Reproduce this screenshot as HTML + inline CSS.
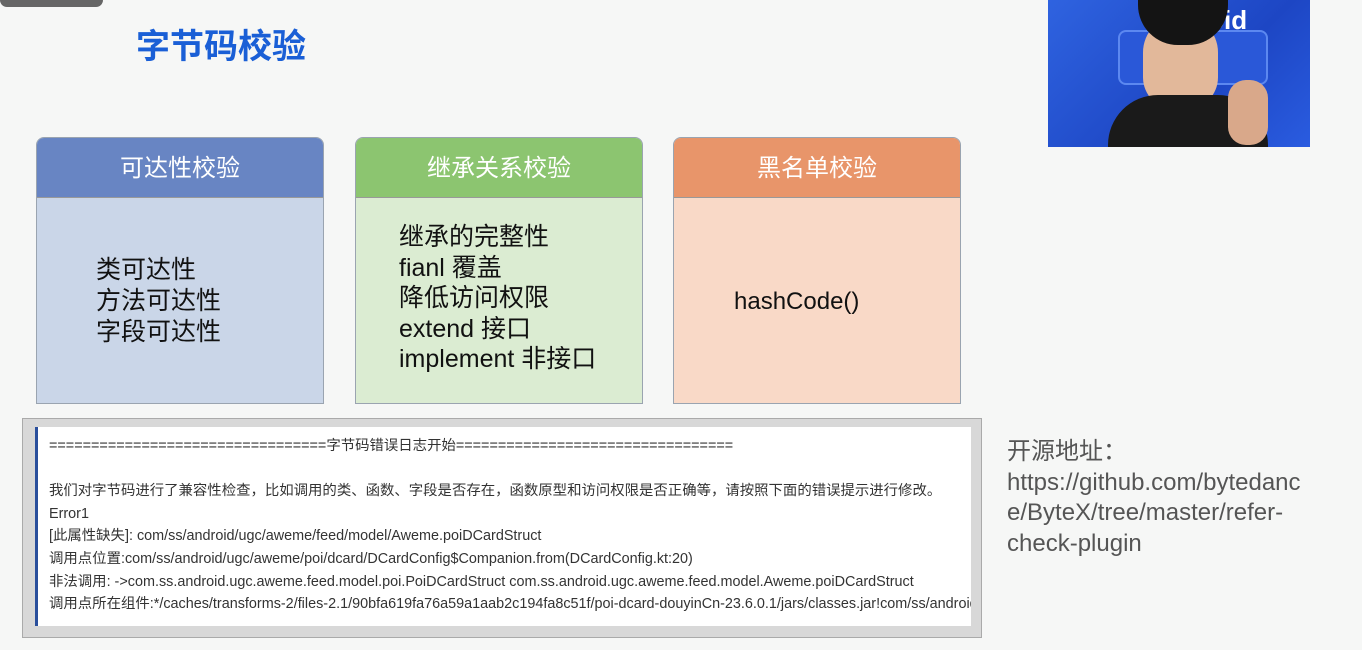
<!DOCTYPE html>
<html><head><meta charset="utf-8"><style>
*{margin:0;padding:0;box-sizing:border-box}
body{width:1362px;height:650px;background:#f6f7f6;position:relative;overflow:hidden;font-family:"Liberation Sans","Noto Sans CJK SC",sans-serif}
.a{position:absolute}
.title{left:136px;top:19px;font-size:34px;font-weight:bold;color:#1a5fd6}
.box{border:1px solid #9aa4b0;border-radius:8px 8px 0 0;overflow:hidden;top:137px;width:288px;height:267px}
.hd{height:60px;color:#fff;font-size:24px;text-align:center;line-height:62px;border-bottom:1px solid #999}
.bd{height:207px;font-size:25px;color:#111;line-height:31px}
.log{left:22px;top:418px;width:960px;height:220px;background:#d8d8d8;border:1px solid #aaa}
.inner{position:absolute;left:12px;top:8px;width:936px;height:199px;background:#fff;border-left:3px solid #2a4f9c;padding:8px 0 0 11px;font-size:14.4px;color:#333;line-height:22.6px;white-space:nowrap;overflow:hidden}
</style></head><body>
<div class="a" style="left:0;top:0;width:103px;height:7px;background:#666;border-radius:0 0 8px 8px"></div>
<div class="a title">字节码校验</div>

<div class="a box" style="left:36px">
<div class="hd" style="background:#6885c3">可达性校验</div>
<div class="bd" style="background:#cad6e8;padding:57px 0 0 59px">类可达性<br>方法可达性<br>字段可达性</div></div>

<div class="a box" style="left:355px">
<div class="hd" style="background:#8cc570">继承关系校验</div>
<div class="bd" style="background:#dbecd2;padding:24px 0 0 43px;line-height:30.5px">继承的完整性<br>fianl 覆盖<br>降低访问权限<br>extend 接口<br>implement 非接口</div></div>

<div class="a box" style="left:673px">
<div class="hd" style="background:#e8956a">黑名单校验</div>
<div class="bd" style="background:#f9d9c7;padding:88px 0 0 60px;font-size:24px">hashCode()</div></div>

<div class="a log"><div class="inner">=================================字节码错误日志开始=================================<br><br>我们对字节码进行了兼容性检查，比如调用的类、函数、字段是否存在，函数原型和访问权限是否正确等，请按照下面的错误提示进行修改。<br>Error1<br>[此属性缺失]: com/ss/android/ugc/aweme/feed/model/Aweme.poiDCardStruct<br>调用点位置:com/ss/android/ugc/aweme/poi/dcard/DCardConfig$Companion.from(DCardConfig.kt:20)<br>非法调用: -&gt;com.ss.android.ugc.aweme.feed.model.poi.PoiDCardStruct com.ss.android.ugc.aweme.feed.model.Aweme.poiDCardStruct<br>调用点所在组件:*/caches/transforms-2/files-2.1/90bfa619fa76a59a1aab2c194fa8c51f/poi-dcard-douyinCn-23.6.0.1/jars/classes.jar!com/ss/android</div></div>

<div class="a" style="left:1007px;top:437px;font-size:24px;color:#555;line-height:30.5px">开源地址：<br>https://github.com/bytedanc<br>e/ByteX/tree/master/refer-<br>check-plugin</div>

<div class="a" style="left:1048px;top:0;width:262px;height:147px;background:linear-gradient(135deg,#2f63e0,#1d46c4 60%,#2a5ce0);overflow:hidden">
<div class="a" style="left:70px;top:30px;width:150px;height:55px;background:#2a58d8;border-radius:8px;border:2px solid #5c88f0"></div>
<div class="a" style="left:150px;top:5px;color:#fff;font-size:26px;font-weight:bold">roid</div>
<div class="a" style="left:95px;top:15px;width:75px;height:95px;background:#e2b89a;border-radius:40px 40px 35px 35px"></div>
<div class="a" style="left:90px;top:0;width:90px;height:45px;background:#141414;border-radius:0 0 40px 40px"></div>
<div class="a" style="left:60px;top:95px;width:160px;height:60px;background:#1a1a1a;border-radius:50px 50px 0 0"></div>
<div class="a" style="left:180px;top:80px;width:40px;height:65px;background:#d9a88a;border-radius:18px"></div>
</div>
</body></html>
